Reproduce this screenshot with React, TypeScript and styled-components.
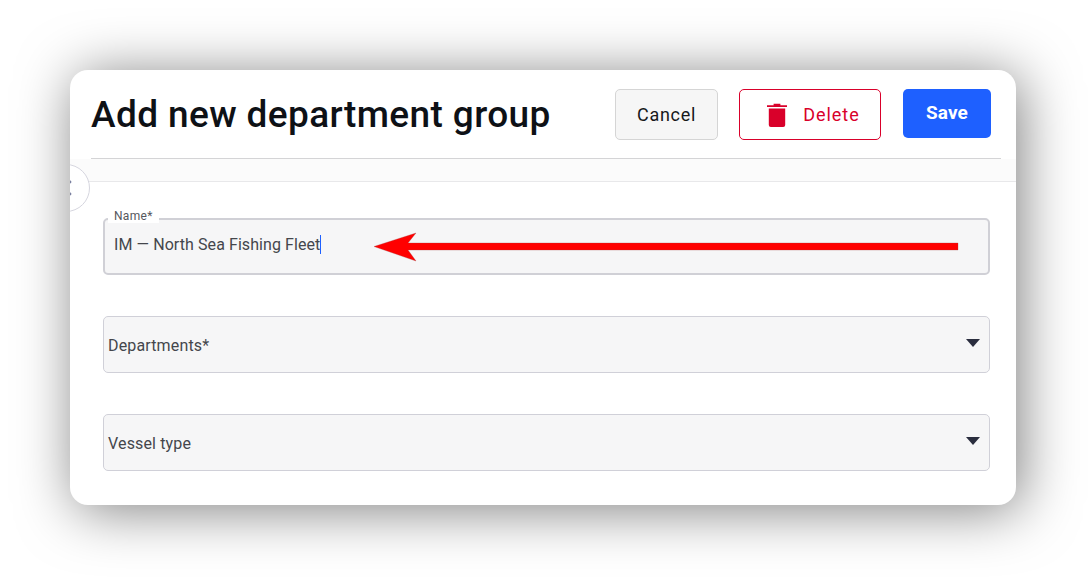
import React from "react";
import styled, { createGlobalStyle } from "styled-components";

const Global = createGlobalStyle`
  html, body { margin: 0; padding: 0; background: #fff; }
  body { font-family: Roboto, "Liberation Sans", sans-serif; }
`;

const Page = styled.div`
  width: 1091px;
  height: 580px;
  padding: 70px 75px 75px 70px;
  box-sizing: border-box;
  position: relative;
  overflow: hidden;
`;

const Card = styled.div`
  width: 946px;
  height: 435px;
  background: #fff;
  border-radius: 18px;
  box-shadow: 5px 5px 56px rgba(0, 0, 0, 0.5);
  position: relative;
  overflow: hidden;
`;

const Header = styled.header`
  margin: 0 15px 0 21px;
  height: 89px;
  box-sizing: border-box;
  padding-top: 19px;
  border-bottom: 1px solid #d4d4d6;
  display: flex;
  align-items: flex-start;
`;

const Title = styled.h1`
  margin: 1px 0 0;
  flex: 1;
  font-size: 37px;
  line-height: 50px;
  font-weight: 500;
  color: #0e1116;
  letter-spacing: 0.39px;
`;

const Actions = styled.div`
  display: flex;
  align-items: flex-start;
  gap: 21px;
  margin-right: 10px;
`;

const BaseButton = styled.button`
  box-sizing: border-box;
  height: 51px;
  border-radius: 5px;
  font-family: inherit;
  font-size: 18px;
  display: flex;
  align-items: center;
  justify-content: center;
  padding: 0;
`;

const CancelButton = styled(BaseButton)`
  width: 103px;
  background: #f6f6f6;
  border: 1px solid #d5d5d5;
  color: #17181a;
  letter-spacing: 0.7px;
`;

const DeleteButton = styled(BaseButton)`
  width: 142px;
  background: #fff;
  border: 1px solid #d9002a;
  color: #d9002a;
  gap: 16px;
  padding-left: 7px;
  letter-spacing: 0.95px;
`;

const SaveButton = styled(BaseButton)`
  width: 88px;
  height: 49px;
  margin-left: 1px;
  background: #1e60ff;
  border: none;
  color: #fff;
  font-weight: 700;
  font-size: 19px;
  letter-spacing: 0.1px;
  padding-bottom: 2px;
`;

const Band = styled.div`
  height: 22px;
  background: #fbfbfb;
  border-bottom: 1px solid #e8e8ea;
`;

const Toggle = styled.div`
  position: absolute;
  left: -28px;
  top: 94px;
  width: 29px;
  height: 46px;
  border: 1px solid #d5d5de;
  border-radius: 50%;
  background: #fff;
  display: flex;
  align-items: center;
  justify-content: flex-end;
  padding-right: 17px;
`;

const Form = styled.form`
  display: flex;
  flex-direction: column;
  padding: 36px 26px 0 33px;
  gap: 41px;
`;

const NameField = styled.div`
  box-sizing: border-box;
  position: relative;
  height: 57px;
  background: #f6f6f7;
  border: 2px solid #d0d0d6;
  border-radius: 5px;
  display: flex;
  align-items: center;
  padding: 0 0 4px 9px;
  font-size: 16px;
  letter-spacing: 0.08px;
  color: #44464c;
`;

const FloatLabel = styled.label`
  position: absolute;
  left: 3px;
  top: -11px;
  padding: 0 6px;
  background: #fff;
  font-size: 12px;
  line-height: 14px;
  letter-spacing: 0.3px;
  color: #55575d;
`;

const Caret = styled.span`
  display: inline-block;
  width: 1px;
  height: 19px;
  background: #1e60ff;
`;

const SelectField = styled.div`
  box-sizing: border-box;
  height: 57px;
  background: #f6f6f7;
  border: 1px solid #d0d0d8;
  border-radius: 5px;
  display: flex;
  align-items: center;
  justify-content: space-between;
  padding: 1px 9px 0 4px;
  font-size: 16px;
  letter-spacing: 0.15px;
  color: #44464c;
`;

const Arrowhead = styled.svg`
  width: 14px;
  height: 8px;
  margin-bottom: 4px;
`;

const Overlay = styled.svg`
  position: absolute;
  left: 370px;
  top: 228px;
  width: 595px;
  height: 38px;
  pointer-events: none;
`;

const Dropdown = () => (
  <Arrowhead viewBox="0 0 14 8">
    <path d="M0 0h14L7 8z" fill="#2a2d3e" />
  </Arrowhead>
);

export default function App() {
  return (
    <Page>
      <Global />
      <Card>
        <Header>
          <Title>Add new department group</Title>
          <Actions>
            <CancelButton type="button">Cancel</CancelButton>
            <DeleteButton type="button">
              <svg width="20" height="24" viewBox="0 0 20 24">
                <path d="M0 2.200h6.600V.8h6.800v1.400H20v1.800H0z" fill="#d9002a" />
                <path d="M1.800 5.400h16.400v16.600a2 2 0 0 1-2 2H3.800a2 2 0 0 1-2-2z" fill="#d9002a" />
              </svg>
              Delete
            </DeleteButton>
            <SaveButton type="button">Save</SaveButton>
          </Actions>
        </Header>
        <Band />
        <Toggle>
          <svg width="4" height="16" viewBox="0 0 4 16">
            <circle cx="2" cy="2" r="1.400" fill="#7a80a0" />
            <circle cx="2" cy="14" r="1.400" fill="#7a80a0" />
          </svg>
        </Toggle>
        <Form>
          <NameField>
            <FloatLabel>Name*</FloatLabel>
            IM — North Sea Fishing Fleet
            <Caret />
          </NameField>
          <SelectField>
            Departments*
            <Dropdown />
          </SelectField>
          <SelectField>
            Vessel type
            <Dropdown />
          </SelectField>
        </Form>
      </Card>
      <Overlay viewBox="0 0 595 38">
        <path d="M588 15H38L46 5 4 18.500 46 33l-8-11H588z" fill="#ff0000" stroke="#a04040" strokeWidth="0.3" />
      </Overlay>
    </Page>
  );
}
